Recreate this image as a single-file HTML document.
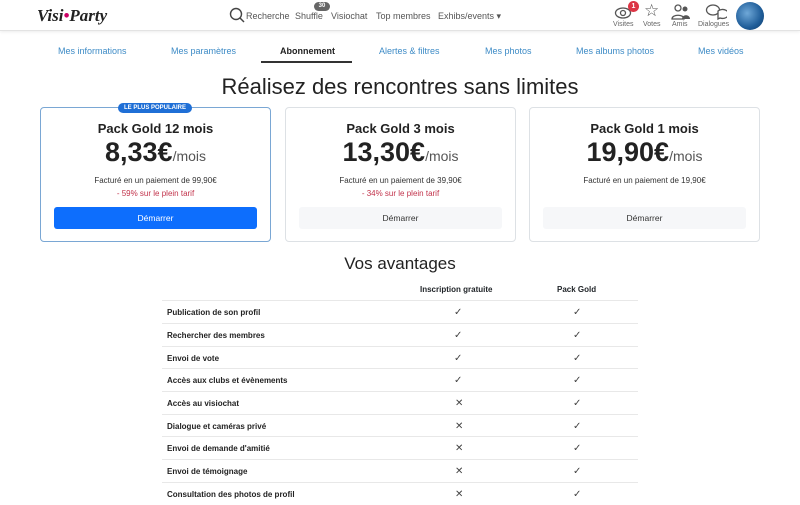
<!DOCTYPE html>
<html><head><meta charset="utf-8"><style>
*{box-sizing:border-box;margin:0;padding:0}
body{width:800px;height:500px;overflow:hidden;background:#fff;font-family:"Liberation Sans",sans-serif;color:#212529;position:relative}
.top{position:absolute;left:0;top:0;width:800px;height:31px;border-bottom:1px solid #e3e3e3;box-shadow:0 1px 3px rgba(0,0,0,.08)}
.abs{position:absolute;white-space:nowrap}
.nav{font-size:9px;color:#555;top:11px}
.tab{top:46px;font-size:9px;color:#3d8bc6}
.card{position:absolute;top:107px;width:231px;height:135px;border:1px solid #dde1e5;border-radius:4px;text-align:center}
.card h3{font-size:13px;font-weight:bold;margin-top:13px;color:#222}
.price{font-size:27px;font-weight:bold;margin-top:1px;color:#222;line-height:31px}
.price span{font-size:14px;font-weight:normal;color:#555}
.fac{font-size:8px;color:#333;margin-top:4px}
.red{font-size:8px;color:#c2334b;margin-top:4px}
.btn{position:absolute;left:13px;right:13px;top:99px;height:22px;border-radius:3px;background:#f6f7f9;font-size:8.5px;line-height:22px;color:#333}
.row{position:absolute;left:162px;width:476px;height:23px;border-top:1px solid #e8e8e8;font-size:8px;font-weight:bold;color:#222}
.row b{position:absolute;left:5px;top:7px}
.row i{position:absolute;top:6px;font-style:normal;font-weight:normal;font-size:10px;color:#444}
</style></head><body>
<div class="top"></div>
<div class="abs" style="left:37px;top:6px;font-family:'Liberation Serif',serif;font-style:italic;font-weight:bold;font-size:17px;color:#222">Visi<span style="color:#c06">•</span>Party</div>
<svg class="abs" style="left:229px;top:7px" width="16" height="16" viewBox="0 0 16 16"><circle cx="7" cy="7" r="5.5" fill="none" stroke="#444" stroke-width="1.4"/><path d="M11 11l4 4" stroke="#444" stroke-width="1.5"/></svg>
<div class="abs nav" style="left:246px">Recherche</div>
<div class="abs nav" style="left:295px">Shuffle</div>
<div class="abs" style="left:314px;top:2px;width:16px;height:9px;border-radius:5px;background:#666;color:#fff;font-size:6px;text-align:center;line-height:9px;font-weight:bold">30</div>
<div class="abs nav" style="left:331px">Visiochat</div>
<div class="abs nav" style="left:376px">Top membres</div>
<div class="abs nav" style="left:438px">Exhibs/events ▾</div>
<svg class="abs" style="left:614px;top:4px" width="20" height="16" viewBox="0 0 20 16"><ellipse cx="9" cy="9" rx="7.5" ry="5" fill="none" stroke="#555" stroke-width="1.3"/><circle cx="9" cy="9" r="2.5" fill="none" stroke="#555" stroke-width="1.3"/></svg>
<div class="abs" style="left:628px;top:1px;width:11px;height:11px;border-radius:6px;background:#dc3545;color:#fff;font-size:7px;text-align:center;line-height:11px;font-weight:bold">1</div>
<div class="abs" style="left:613px;top:21px;font-size:7px;color:#666">Visites</div>
<div class="abs" style="left:644px;top:1px;font-size:17px;color:#555">☆</div>
<div class="abs" style="left:643px;top:21px;font-size:7px;color:#666">Votes</div>
<svg class="abs" style="left:671px;top:4px" width="20" height="16" viewBox="0 0 20 16"><circle cx="7" cy="4" r="3" fill="none" stroke="#555" stroke-width="1.3"/><path d="M1 15c0-5 12-5 12 0z" fill="none" stroke="#555" stroke-width="1.3"/><circle cx="14" cy="5" r="2.5" fill="#555"/><path d="M11 15c0-5 8-5 8 0z" fill="#555"/></svg>
<div class="abs" style="left:672px;top:21px;font-size:7px;color:#666">Amis</div>
<svg class="abs" style="left:705px;top:4px" width="22" height="16" viewBox="0 0 22 16"><ellipse cx="8" cy="6" rx="6.5" ry="5" fill="none" stroke="#555" stroke-width="1.3"/><path d="M13 7a6 4.5 0 1 1 2 7l-2 1z" fill="#fff" stroke="#555" stroke-width="1.3"/></svg>
<div class="abs" style="left:698px;top:21px;font-size:7px;color:#666">Dialogues</div>
<div class="abs" style="left:736px;top:2px;width:28px;height:28px;border-radius:50%;background:radial-gradient(circle at 40% 40%,#6fa8d8,#1f5d99 60%,#0f3a66)"></div>
<div class="abs tab" style="left:58px">Mes informations</div>
<div class="abs tab" style="left:171px">Mes paramètres</div>
<div class="abs tab" style="left:280px;color:#222;font-weight:bold">Abonnement</div>
<div class="abs" style="left:261px;top:61px;width:91px;height:2px;background:#333"></div>
<div class="abs tab" style="left:379px">Alertes &amp; filtres</div>
<div class="abs tab" style="left:485px">Mes photos</div>
<div class="abs tab" style="left:576px">Mes albums photos</div>
<div class="abs tab" style="left:698px">Mes vidéos</div>
<div class="abs" style="left:0;width:800px;top:74px;text-align:center;font-size:22px;color:#222">Réalisez des rencontres sans limites</div>
<div class="card" style="left:40px;border:1.5px solid #7aa7d4"><h3>Pack Gold 12 mois</h3><div class="price">8,33€<span>/mois</span></div><div class="fac">Facturé en un paiement de 99,90€</div><div class="red">- 59% sur le plein tarif</div><div class="btn" style="background:#0d6efd;color:#fff">Démarrer</div></div>
<div class="abs" style="left:118px;top:103px;width:74px;height:10px;border-radius:5px;background:#1f6fd6;color:#fff;font-size:6px;font-weight:bold;text-align:center;line-height:10px">LE PLUS POPULAIRE</div>
<div class="card" style="left:285px"><h3>Pack Gold 3 mois</h3><div class="price">13,30€<span>/mois</span></div><div class="fac">Facturé en un paiement de 39,90€</div><div class="red">- 34% sur le plein tarif</div><div class="btn">Démarrer</div></div>
<div class="card" style="left:529px"><h3>Pack Gold 1 mois</h3><div class="price">19,90€<span>/mois</span></div><div class="fac">Facturé en un paiement de 19,90€</div><div class="btn">Démarrer</div></div>
<div class="abs" style="left:0;width:800px;top:254px;text-align:center;font-size:17px;color:#222">Vos avantages</div>
<div class="abs" style="left:420px;top:285px;font-size:8px;font-weight:bold">Inscription gratuite</div>
<div class="abs" style="left:557px;top:285px;font-size:8px;font-weight:bold">Pack Gold</div>
<div class="row" style="top:300px"><b>Publication de son profil</b><i style="left:292px">✓</i><i style="left:411px">✓</i></div>
<div class="row" style="top:323px"><b>Rechercher des membres</b><i style="left:292px">✓</i><i style="left:411px">✓</i></div>
<div class="row" style="top:346px"><b>Envoi de vote</b><i style="left:292px">✓</i><i style="left:411px">✓</i></div>
<div class="row" style="top:368px"><b>Accès aux clubs et évènements</b><i style="left:292px">✓</i><i style="left:411px">✓</i></div>
<div class="row" style="top:391px"><b>Accès au visiochat</b><i style="left:293px">✕</i><i style="left:411px">✓</i></div>
<div class="row" style="top:414px"><b>Dialogue et caméras privé</b><i style="left:293px">✕</i><i style="left:411px">✓</i></div>
<div class="row" style="top:436px"><b>Envoi de demande d'amitié</b><i style="left:293px">✕</i><i style="left:411px">✓</i></div>
<div class="row" style="top:459px"><b>Envoi de témoignage</b><i style="left:293px">✕</i><i style="left:411px">✓</i></div>
<div class="row" style="top:482px"><b>Consultation des photos de profil</b><i style="left:293px">✕</i><i style="left:411px">✓</i></div>
</body></html>
